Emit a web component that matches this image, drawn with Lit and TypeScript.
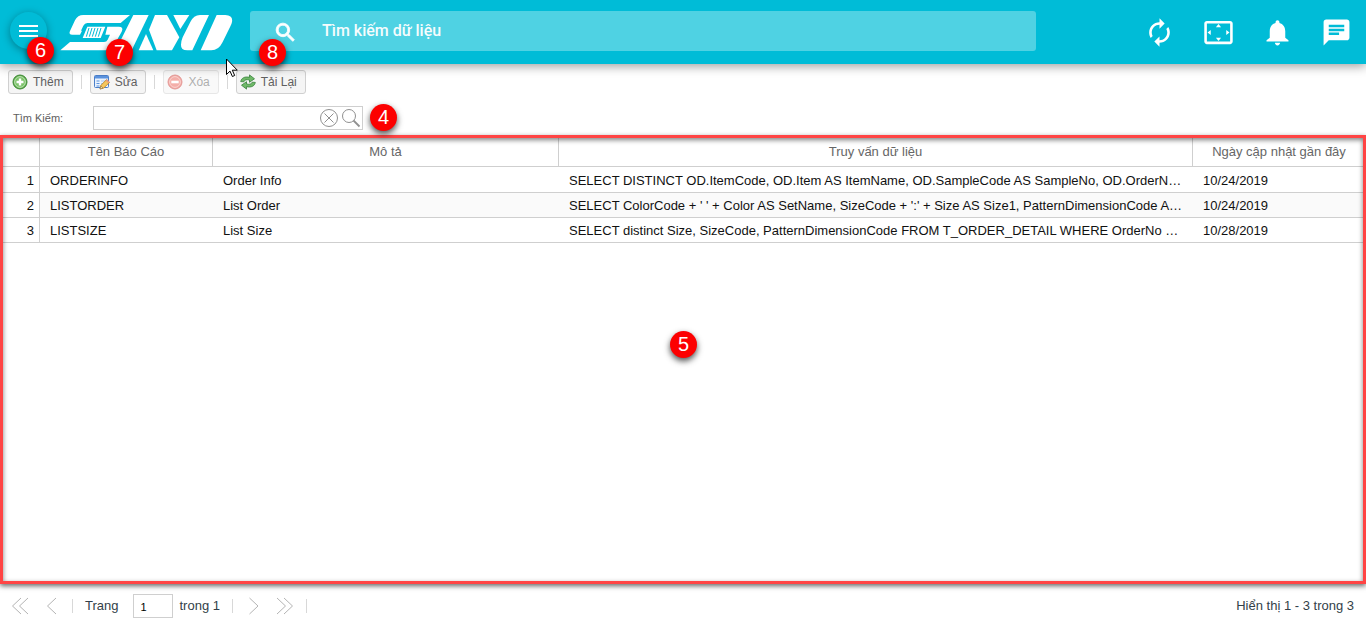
import { LitElement, html, css, svg } from "lit";
import { customElement, property } from "lit/decorators.js";
import { classMap } from "lit/directives/class-map.js";

interface Report {
  name: string;
  description: string;
  query: string;
  updated: string;
}

const REPORTS: Report[] = [
  {
    name: "ORDERINFO",
    description: "Order Info",
    query:
      "SELECT DISTINCT OD.ItemCode, OD.Item AS ItemName, OD.SampleCode AS SampleNo, OD.OrderNo, OD",
    updated: "10/24/2019",
  },
  {
    name: "LISTORDER",
    description: "List Order",
    query:
      "SELECT ColorCode + ' ' + Color AS SetName, SizeCode + ':' + Size AS Size1, PatternDimensionCode AS P",
    updated: "10/24/2019",
  },
  {
    name: "LISTSIZE",
    description: "List Size",
    query:
      "SELECT distinct Size, SizeCode, PatternDimensionCode FROM T_ORDER_DETAIL WHERE OrderNo LIKE",
    updated: "10/28/2019",
  },
];

const addIcon = svg`
  <circle cx="8" cy="8" r="7" fill="#5cab4b" stroke="#3f8a35"/>
  <circle cx="8" cy="8" r="5.4" fill="#7cc36a" stroke="#d5efcd" stroke-width=".8"/>
  <path d="M6.8 4.5h2.4v2.3h2.3v2.4H9.2v2.3H6.8V9.2H4.5V6.8h2.3z" fill="#fff"/>`;

const editIcon = svg`
  <rect x=".5" y="1.5" width="14" height="12" rx="1" fill="#e9f2fd" stroke="#4b7fc9"/>
  <path d="M1 2h13v2.5H1z" fill="#5b93de"/>
  <path d="M2.5 7h3M2.5 9.5h3M2.5 12h3" stroke="#5b93de"/>
  <path d="M7 7h6M7 9.5h4" stroke="#a9c6ee"/>
  <path d="M6 15l1-3.8 5.6-5.6 2.9 2.8L9.8 14z" fill="#f6c65b" stroke="#b97f22" stroke-width=".8"/>
  <path d="M6 15l.8-3 2.2 2.1z" fill="#f8e7c5" stroke="#8a6a35" stroke-width=".6"/>
  <path d="M11.6 6.6l1.3-1.3 2.7 2.7-1.3 1.3z" fill="#e89a7c"/>`;

const deleteIcon = svg`
  <circle cx="8" cy="8" r="7" fill="#e5483f" stroke="#c93a34"/>
  <circle cx="8" cy="8" r="5.4" fill="#ea6055" stroke="#f9c0ba" stroke-width=".8"/>
  <path d="M4.3 6.7h7.4v2.6H4.3z" fill="#fff"/>`;

const reloadIcon = svg`
  <path d="M.7 7.6C1.4 3.900 4.600 2.300 9.500 3.300V.9l5 3.900-5 3.500V6C6.500 5.300 4.600 5.800 3.800 7.800z" fill="#6fb968" stroke="#36803a" stroke-width=".8"/>
  <path d="M15.300 8.400c-.7 3.700-3.900 5.300-8.800 4.300v2.400l-5-3.900 5-3.500V10c3 .7 4.900.2 5.700-1.800z" fill="#6fb968" stroke="#36803a" stroke-width=".8"/>`;

@customElement("tool-button")
class ToolButton extends LitElement {
  @property() label = "";
  @property({ attribute: false }) icon: unknown = null;
  @property({ type: Boolean }) disabled = false;

  static styles = css`
    :host {
      display: block;
    }
    .button {
      display: flex;
      align-items: center;
      gap: 5px;
      height: 24px;
      padding: 0 8px 0 3px;
      border: 1px solid #d0d0d0;
      border-radius: 3px;
      background: #f5f5f5;
      color: #606060;
      font: 12px/16px "Liberation Sans", Arial, sans-serif;
    }
    .button:disabled {
      opacity: 0.5;
    }
    .icon {
      width: 16px;
      height: 16px;
    }
  `;

  render() {
    return html`<button class="button" type="button" ?disabled=${this.disabled}>
      <svg class="icon" viewBox="0 0 16 16" aria-hidden="true">${this.icon}</svg>
      <span>${this.label}</span>
    </button>`;
  }
}

@customElement("step-badge")
class StepBadge extends LitElement {
  @property() number = "";

  static styles = css`
    :host {
      position: absolute;
      z-index: 5;
      display: flex;
      align-items: center;
      justify-content: center;
      width: 27px;
      height: 27px;
      border-radius: 50%;
      background: #fc0000;
      box-shadow: 0 3px 6px rgba(0, 0, 0, 0.7);
      color: #fff;
      font: 20px/27px "Liberation Sans", Arial, sans-serif;
    }
  `;

  render() {
    return html`${this.number}`;
  }
}

@customElement("app-header")
class AppHeader extends LitElement {
  static styles = css`
    :host {
      position: relative;
      z-index: 2;
      display: flex;
      align-items: center;
      height: 64px;
      padding: 0 14px 0 10px;
      box-sizing: border-box;
      background: #00bcd7;
      box-shadow: 0 2px 10px rgba(0, 0, 0, 0.4);
    }
    .menu {
      display: flex;
      align-items: center;
      justify-content: center;
      width: 37px;
      height: 37px;
      margin: 0 13px 3px 0;
      padding: 0;
      border: 0;
      border-radius: 50%;
      background: transparent;
      box-shadow: 0 2px 8px rgba(0, 0, 0, 0.35);
    }
    .menu-icon {
      width: 19px;
      height: 12px;
    }
    .logo {
      width: 173px;
      height: 37px;
    }
    .search {
      display: flex;
      flex: 1;
      align-items: center;
      gap: 24px;
      height: 40px;
      margin: 0 108px 2px 17px;
      padding-left: 23px;
      border-radius: 3px;
      background: #4fd2e3;
    }
    .search-icon {
      width: 25px;
      height: 25px;
      padding-top: 2px;
      fill: #fff;
      stroke: #fff;
      stroke-width: 0.8;
    }
    .search-input {
      flex: 1;
      min-width: 0;
      padding: 0;
      border: 0;
      outline: 0;
      background: transparent;
      color: #fff;
      font: 500 16px/24px Roboto, sans-serif;
    }
    .search-input::placeholder {
      color: #fff;
      opacity: 0.95;
    }
    .actions {
      display: flex;
      gap: 28px;
    }
    .action {
      width: 31px;
      height: 31px;
      padding: 0;
      border: 0;
      background: transparent;
    }
    .action-icon {
      display: block;
      width: 31px;
      height: 31px;
      fill: #fff;
    }
  `;

  private action(label: string, path: string) {
    return html`<button class="action" type="button" aria-label=${label}>
      <svg class="action-icon" viewBox="0 0 24 24"><path d=${path}></path></svg>
    </button>`;
  }

  render() {
    return html`
      <button class="menu" type="button" aria-label="Menu">
        <svg class="menu-icon" viewBox="0 0 19 12"><path d="M0 1h19M0 6h19M0 11h19" stroke="#fff" stroke-width="2" /></svg>
      </button>
      <svg class="logo" viewBox="180 42 519 111" role="img" aria-label="SINO">
        <g fill="#fff">
          <path d="M390 45L362 69H262Q254 69 250 77L243 92H246L240 104H217Q205 104 210 93L225 61Q233 45 250 45Z" />
          <path d="M181 151L210 126H312Q320 126 323 119L330 104H316L322 80H356Q372 80 365 95L343 134Q335 151 318 151Z" />
          <path d="M400 45H446L395 151H347Z" />
          <path d="M438 102L460 151H416Z" />
          <path d="M465 45H501L538 112L516 151H470L447 89Z" />
          <path d="M520 45H568L541 87Z" />
          <path d="M600 45H627L577 151H562Q542 151 543 134Q543 124 548 112L571 66Q581 45 600 45Z" />
          <path d="M650 45H676Q702 46 695 70Q692 78 668 126Q656 151 634 151H602Z" />
          <path d="M262 80H316L302 114H248Z" />
        </g>
        <path d="M267 84l-8 26M276 84l-8 26M285 84l-8 26M294 84l-8 26M303 84l-8 26" fill="none" stroke="#00bcd7" stroke-width="3" />
      </svg>
      <label class="search">
        <svg class="search-icon" viewBox="0 0 24 24" aria-hidden="true">
          <path d="M15.500 14h-.79l-.28-.27A6.471 6.471 0 0 0 16 9.500 6.500 6.500 0 1 0 9.500 16c1.610 0 3.090-.59 4.230-1.570l.27.28v.79l5 4.990L20.490 19l-4.990-5zm-6 0C7.010 14 5 11.990 5 9.500S7.010 5 9.500 5 14 7.010 14 9.500 11.990 14 9.500 14z" />
        </svg>
        <input class="search-input" type="text" aria-label="Tìm kiếm dữ liệu" placeholder="Tìm kiếm dữ liệu" />
      </label>
      <div class="actions">
        ${this.action("Đồng bộ", "M12 6v3l4-4-4-4v3c-4.420 0-8 3.580-8 8 0 1.570.46 3.030 1.240 4.260L6.700 14.800A5.870 5.870 0 0 1 6 12c0-3.310 2.690-6 6-6zm6.760 1.740L17.300 9.200c.44.84.7 1.790.7 2.800 0 3.310-2.690 6-6 6v-3l-4 4 4 4v-3c4.420 0 8-3.580 8-8 0-1.570-.46-3.030-1.240-4.260z")}
        ${this.action("Toàn màn hình", "M12.010 5.500L10 8h4l-1.990-2.500zM18 10v4l2.500-1.990L18 10zM6 10l-2.500 2.010L6 14v-4zm8 6h-4l2.010 2.500L14 16zm7-13H3c-1.100 0-2 .9-2 2v14c0 1.100.9 2 2 2h18c1.100 0 2-.9 2-2V5c0-1.100-.9-2-2-2zm0 16.010H3V4.990h18v14.020z")}
        ${this.action("Thông báo", "M12 22c1.100 0 2-.9 2-2h-4c0 1.100.89 2 2 2zm6-6v-5c0-3.070-1.640-5.640-4.500-6.320V4c0-.83-.67-1.500-1.500-1.500s-1.500.67-1.500 1.500v.68C7.630 5.360 6 7.920 6 11v5l-2.500 2v1h17v-1L18 16z")}
        ${this.action("Tin nhắn", "M20 2H4c-1.100 0-1.990.9-1.990 2L2 22l4-4h14c1.100 0 2-.9 2-2V4c0-1.100-.9-2-2-2zM6 9h12v2H6V9zm8 5H6v-2h8v2zm4-6H6V6h12v2z")}
      </div>
    `;
  }
}

@customElement("report-grid")
class ReportGrid extends LitElement {
  @property({ attribute: false }) rows: Report[] = [];

  static styles = css`
    :host {
      position: relative;
      display: block;
      border: 3px solid #ff4444;
      box-shadow: 0 2px 5px rgba(0, 0, 0, 0.6);
      background: #fff;
    }
    :host::after {
      content: "";
      position: absolute;
      inset: 0;
      box-shadow: inset 0 2px 5px rgba(0, 0, 0, 0.5);
      pointer-events: none;
    }
    .table {
      width: 100%;
      table-layout: fixed;
      border-collapse: separate;
      border-spacing: 0;
      color: #111;
      font: 13px/16px "Liberation Sans", Arial, sans-serif;
    }
    .head {
      height: 29px;
      box-sizing: border-box;
      padding: 0 10px 1px;
      border-right: 1px solid #cfcfcf;
      border-bottom: 1px solid #cfcfcf;
      color: #666;
      font-weight: 400;
    }
    .head:last-child {
      padding: 0 8px 1px 10px;
      border-right: 0;
    }
    .cell {
      height: 25px;
      box-sizing: border-box;
      padding: 2px 10px 0;
      border-bottom: 1px solid #cfcfcf;
      overflow: hidden;
      text-overflow: ellipsis;
      white-space: nowrap;
    }
    .first .cell {
      height: 26px;
    }
    .alt .cell {
      background: #fafafa;
    }
    .table .index {
      padding: 2px 5px 0;
      border-right: 1px solid #cfcfcf;
      background: #fff;
      text-align: right;
    }
    .col-index {
      width: 37px;
    }
    .col-name {
      width: 173px;
    }
    .col-description {
      width: 346px;
    }
    .col-updated {
      width: 170px;
    }
  `;

  render() {
    return html`<table class="table">
      <colgroup>
        <col class="col-index" />
        <col class="col-name" />
        <col class="col-description" />
        <col />
        <col class="col-updated" />
      </colgroup>
      <thead>
        <tr>
          <th class="head"></th>
          <th class="head">Tên Báo Cáo</th>
          <th class="head">Mô tả</th>
          <th class="head">Truy vấn dữ liệu</th>
          <th class="head">Ngày cập nhật gần đây</th>
        </tr>
      </thead>
      <tbody>
        ${this.rows.map(
          (row, i) => html`<tr class=${classMap({ first: i === 0, alt: i % 2 === 1 })}>
            <td class="cell index">${i + 1}</td>
            <td class="cell">${row.name}</td>
            <td class="cell">${row.description}</td>
            <td class="cell">${row.query}</td>
            <td class="cell">${row.updated}</td>
          </tr>`,
        )}
      </tbody>
    </table>`;
  }
}

@customElement("grid-pager")
class GridPager extends LitElement {
  static styles = css`
    :host {
      display: flex;
      align-items: center;
      height: 41px;
      padding: 3px 12px 0 11px;
      box-sizing: border-box;
      color: #333f49;
      font: 13px/16px "Liberation Sans", Arial, sans-serif;
    }
    .nav {
      display: flex;
      padding: 0;
      border: 0;
      background: transparent;
    }
    .arrow {
      width: 18px;
      height: 18px;
      fill: none;
      stroke: #b4b4b4;
    }
    .arrows {
      display: flex;
      gap: 13px;
    }
    .divider {
      width: 1px;
      height: 14px;
      margin: 0 12px;
      background: #d8d8d8;
    }
    .page {
      display: flex;
      align-items: center;
      gap: 15px;
    }
    .page-input {
      width: 40px;
      height: 24px;
      box-sizing: border-box;
      margin-right: 6px;
      padding: 2px 6px 0;
      border: 1px solid #cfcfcf;
      color: #000;
      font: 11px/16px "Liberation Sans", Arial, sans-serif;
    }
    .summary {
      margin-left: auto;
    }
  `;

  private nav(label: string, path: string) {
    return html`<button class="nav" type="button" aria-label=${label}>
      <svg class="arrow" viewBox="0 0 18 18"><path d=${path}></path></svg>
    </button>`;
  }

  render() {
    return html`
      <div class="arrows">
        ${this.nav("Trang đầu", "M10 1L1.500 9l8.500 8M17 1L8.500 9l8.500 8")}
        ${this.nav("Trang trước", "M14 1L5.500 9l8.500 8")}
      </div>
      <span class="divider"></span>
      <label class="page">Trang <input class="page-input" type="text" value="1" /></label>
      <span>trong 1</span>
      <span class="divider"></span>
      <div class="arrows">
        ${this.nav("Trang sau", "M4.500 1L13 9l-8.500 8")}
        ${this.nav("Trang cuối", "M1 1l8.500 8L1 17M8 1l8.500 8L8 17")}
      </div>
      <span class="divider"></span>
      <span class="summary">Hiển thị 1 - 3 trong 3</span>
    `;
  }
}

@customElement("app-root")
class AppRoot extends LitElement {
  static styles = css`
    :host {
      position: relative;
      display: flex;
      flex-direction: column;
      min-height: 100vh;
      background: #fff;
      font-family: "Liberation Sans", Arial, sans-serif;
    }
    .toolbar {
      display: flex;
      align-items: center;
      gap: 8px;
      padding: 6px 8px;
    }
    .divider {
      width: 1px;
      height: 14px;
      background: #d8d8d8;
    }
    .filter {
      display: flex;
      align-items: center;
      padding: 6px 13px 5px;
    }
    .filter-label {
      width: 80px;
      color: #606060;
      font-size: 11px;
      line-height: 16px;
    }
    .filter-field {
      display: flex;
      align-items: center;
      gap: 2px;
      width: 270px;
      height: 24px;
      box-sizing: border-box;
      padding-right: 1px;
      border: 1px solid #cfcfcf;
      background: #fff;
    }
    .filter-input {
      flex: 1;
      min-width: 0;
      border: 0;
      outline: 0;
      padding: 0 6px;
      font: 12px/16px "Liberation Sans", Arial, sans-serif;
    }
    .filter-button {
      display: flex;
      padding: 0;
      border: 0;
      background: transparent;
    }
    .filter-icon {
      width: 20px;
      height: 20px;
      fill: none;
      stroke: #909090;
    }
    .grid {
      flex: 1;
    }
    .badge-menu {
      left: 27px;
      top: 37px;
    }
    .badge-edit {
      left: 106px;
      top: 39px;
    }
    .badge-reload {
      left: 259px;
      top: 39px;
    }
    .badge-filter {
      left: 370px;
      top: 104px;
    }
    .badge-grid {
      left: calc(50% - 13px);
      top: 331px;
    }
    .pointer {
      position: absolute;
      z-index: 6;
      left: 226px;
      top: 58px;
      width: 12px;
      height: 19px;
    }
  `;

  render() {
    return html`
      <app-header></app-header>
      <div class="toolbar">
        <tool-button label="Thêm" .icon=${addIcon}></tool-button>
        <span class="divider"></span>
        <tool-button label="Sửa" .icon=${editIcon}></tool-button>
        <span class="divider"></span>
        <tool-button label="Xóa" .icon=${deleteIcon} disabled></tool-button>
        <span class="divider"></span>
        <tool-button label="Tải Lại" .icon=${reloadIcon}></tool-button>
      </div>
      <div class="filter">
        <label class="filter-label" for="filter">Tìm Kiếm:</label>
        <div class="filter-field">
          <input class="filter-input" id="filter" type="text" />
          <button class="filter-button" type="button" aria-label="Xóa tìm kiếm">
            <svg class="filter-icon" viewBox="0 0 20 20"><circle cx="10" cy="10" r="8.500" /><path d="M5.500 5.500l9 9M14.500 5.500l-9 9" /></svg>
          </button>
          <button class="filter-button" type="button" aria-label="Tìm kiếm">
            <svg class="filter-icon" viewBox="0 0 20 20"><circle cx="8" cy="8" r="6.500" /><path d="M12.500 12.500l6 6" stroke-width="1.800" /></svg>
          </button>
        </div>
      </div>
      <report-grid class="grid" .rows=${REPORTS}></report-grid>
      <grid-pager></grid-pager>

      <step-badge class="badge-menu" number="6"></step-badge>
      <step-badge class="badge-edit" number="7"></step-badge>
      <step-badge class="badge-reload" number="8"></step-badge>
      <step-badge class="badge-filter" number="4"></step-badge>
      <step-badge class="badge-grid" number="5"></step-badge>
      <svg class="pointer" viewBox="0 0 12 19" aria-hidden="true">
        <path d="M.5 1v15.500l3.500-3.400 2.400 5.400 2.300-1-2.400-5.300h5z" fill="#fff" stroke="#000" />
      </svg>
    `;
  }
}
